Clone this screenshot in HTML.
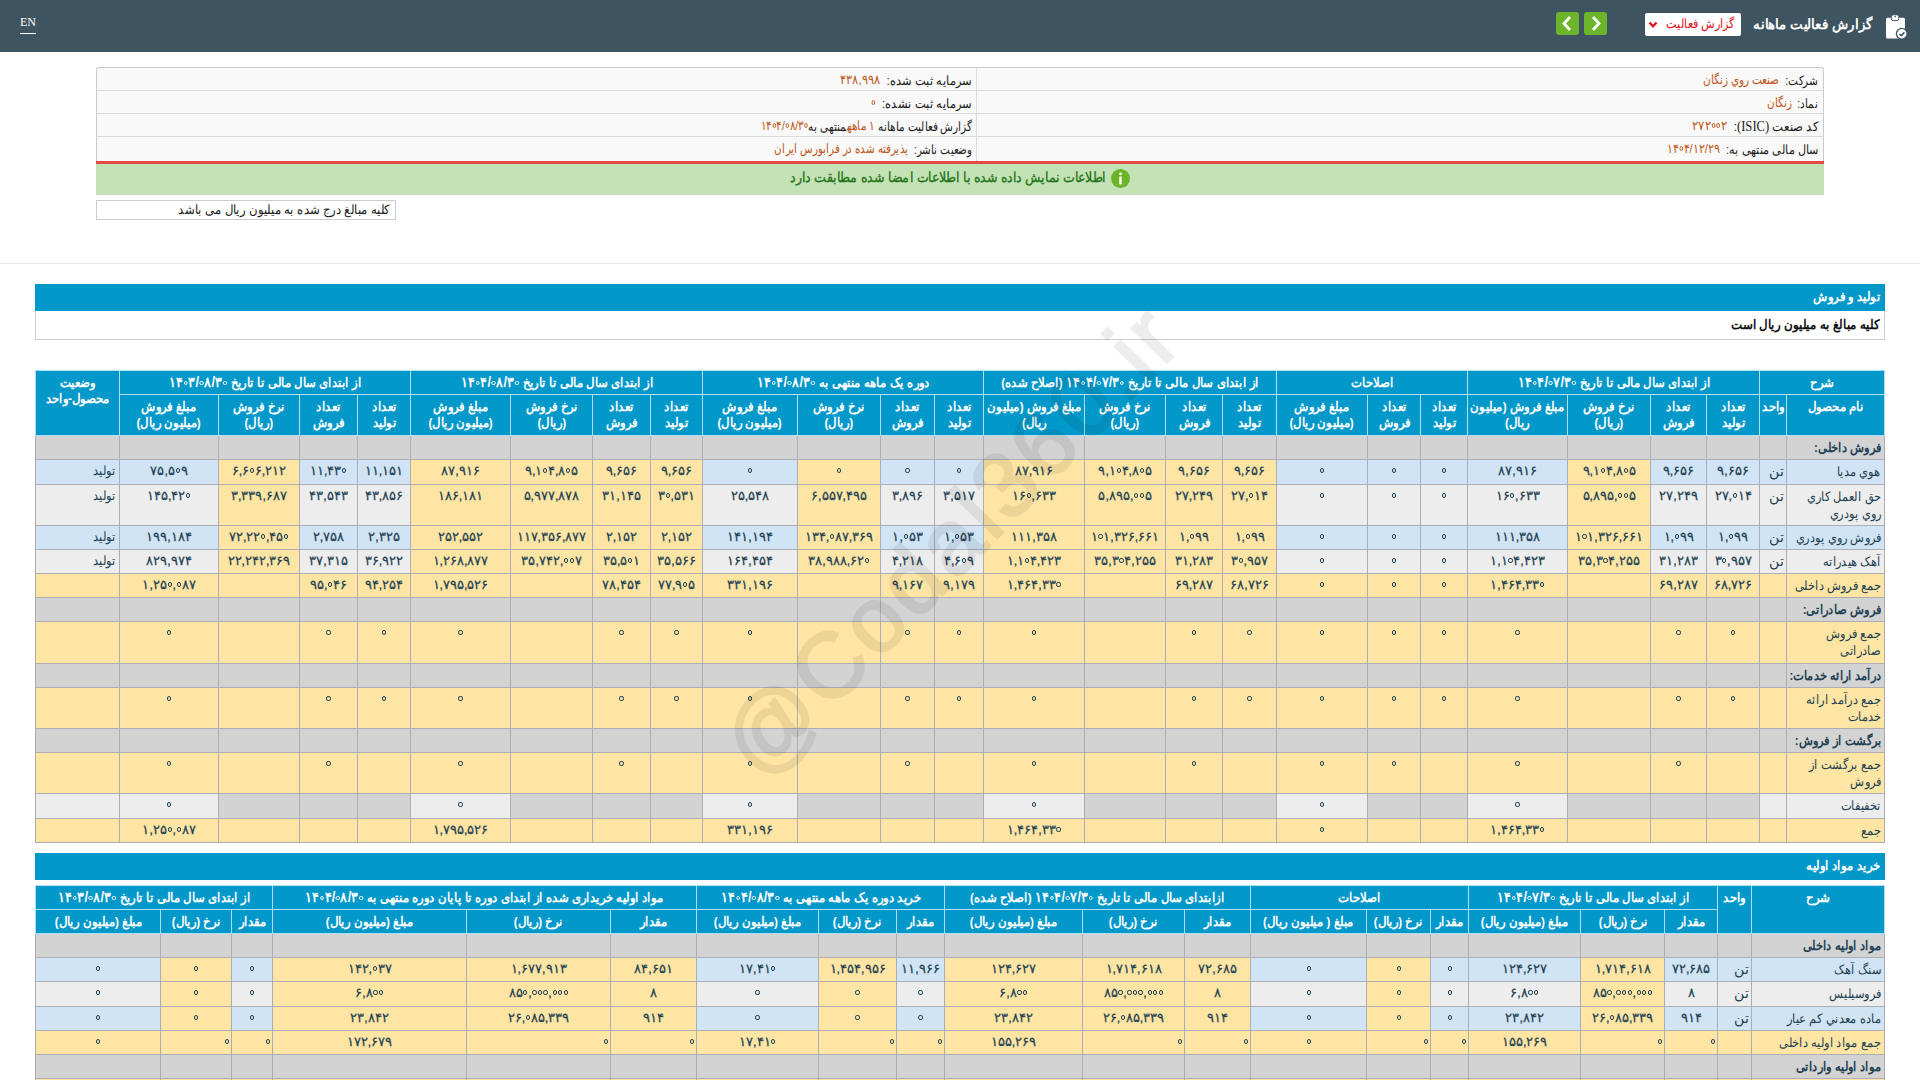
<!DOCTYPE html>
<html lang="fa" dir="rtl"><head><meta charset="utf-8"><title>Codal</title>
<style>
html,body{margin:0;padding:0;}
body{width:1920px;height:1080px;overflow:hidden;position:relative;background:#fff;font-family:"Liberation Sans",sans-serif;font-size:13px;color:#222;direction:rtl;}
.abs{position:absolute;}
.topbar{position:absolute;left:0;top:0;width:1920px;height:52px;background:#3f5461;}
.en{position:absolute;left:20px;top:16px;font-family:"Liberation Serif",serif;font-size:12px;color:#fff;direction:ltr;}
.en span{display:block;border-bottom:1px solid #fff;padding-bottom:5px;line-height:12px;}
.title{position:absolute;right:47px;top:14px;transform:scaleX(.95);transform-origin:100% 50%;color:#fff;font-weight:bold;font-size:14px;line-height:20px;white-space:nowrap;}
.dd{position:absolute;left:1645px;top:13px;width:96px;height:23px;background:#fff;border-radius:2px;}
.dd .tx{position:absolute;right:6px;top:2px;color:#e0141e;font-size:13px;transform:scaleX(.86);transform-origin:100% 50%;line-height:18px;white-space:nowrap;}
.gb{position:absolute;top:12px;width:23px;height:23px;background:#6cb52a;border-radius:3px;}
.info{position:absolute;left:96px;top:67px;width:1726px;height:94px;border:1px solid #cacaca;border-bottom:none;border-radius:3px 3px 0 0;background:#f9f9f9;}
.irow{position:absolute;left:0;width:1726px;height:23px;border-top:1px solid #dcdcdc;}
.ivl{position:absolute;left:879px;top:0;width:1px;height:94px;background:#dcdcdc;}
.it{position:absolute;white-space:nowrap;transform-origin:100% 50%;font-size:13px;line-height:18px;color:#222;}
.it b{font-weight:normal;color:#c0561a;position:relative;top:-1px;}
.red{position:absolute;left:96px;top:161px;width:1728px;height:3px;background:#e14a45;}
.green{position:absolute;left:96px;top:164px;width:1728px;height:31px;background:#c3e2b5;}
.gtext{position:absolute;right:814px;top:167px;transform:scaleX(.9);transform-origin:100% 50%;color:#1f741a;-webkit-text-stroke:0.3px #1f741a;font-size:14px;line-height:20px;white-space:nowrap;}
.icon-i{position:absolute;left:1111px;top:169px;width:19px;height:19px;border-radius:50%;background:#6cb52a;}
.note{position:absolute;left:96px;top:200px;width:298px;height:18px;border:1px solid #ccc;}
.note span{display:inline-block;position:absolute;right:5px;top:0px;font-size:13px;line-height:17px;white-space:nowrap;color:#222;}
.sep{position:absolute;left:0;top:263px;width:1920px;height:1px;background:#e8e8e8;}
.sh{position:absolute;left:35px;width:1850px;height:27px;background:#0398ca;color:#fff;font-weight:bold;font-size:13px;}
.sh span{position:absolute;right:5px;top:4px;line-height:18px;transform:scaleX(.9);transform-origin:100% 50%;}
.sbox{position:absolute;left:35px;top:311px;width:1848px;height:28px;border:1px solid #ccc;border-top:none;}
.sbox span{position:absolute;right:5px;top:5px;transform:scaleX(.91);transform-origin:100% 50%;font-weight:bold;font-size:13px;line-height:18px;color:#111;}
table.t{position:absolute;border-collapse:collapse;table-layout:fixed;font-size:12px;}
table.t th{background:#0398ca;color:#fff;font-weight:bold;border:1px solid #ade0f4;padding:0 2px;line-height:16px;text-align:center;vertical-align:middle;overflow:hidden;white-space:nowrap;}
table.t th.vt{vertical-align:top;padding-top:4px;}
table.t td{border:1px solid #adadb6;padding:0 3px;line-height:16px;vertical-align:top;text-align:center;color:#1f4254;overflow:hidden;white-space:nowrap;}
table.t td.n{padding-top:3px;direction:ltr;font-size:12.5px;-webkit-text-stroke:0.25px #1f4254;}
i.z{display:inline-block;width:2.2px;height:2.2px;border:1.15px solid currentColor;border-radius:50%;vertical-align:2.5px;margin:0 0.7px;}
.sx{display:inline-block;transform:scaleX(.88);transform-origin:100% 50%;}
table.t td.r{text-align:right;padding-right:1px;}
table.t td.lbl{text-align:right;padding-top:3px;white-space:nowrap;line-height:17px;color:#1f4254;font-size:13px;}
table.t td.u{padding-top:3px;font-size:14px;text-align:right;padding-right:2px;}
table.t td.st{text-align:right;padding-top:3px;font-size:13px;}
table.t tr.cat td{background:#d3d3d3;}
table.t tr.cat td.lbl{font-weight:bold;white-space:nowrap;}
.wm{position:absolute;left:601px;top:490px;width:700px;height:100px;line-height:100px;text-align:center;font-size:92px;letter-spacing:4px;font-weight:normal;-webkit-text-stroke:2.5px #000;color:#000;opacity:0.068;transform:rotate(-46deg);white-space:nowrap;direction:ltr;pointer-events:none;z-index:5;}

.d{display:inline-block;direction:ltr;}
.it b.d{color:#c0561a;}
table.t th i.z{vertical-align:1.5px;width:2.4px;height:2.4px;border-width:1.3px;}
.hx{display:inline-block;transform:scaleX(.9);margin:0 -30px;font-size:13px;}
table.t th .d{font-size:1.1em;line-height:14px;}

</style></head><body>
<div class="topbar"></div>
<div class="en"><span>EN</span></div>
<div class="title">گزارش فعالیت ماهانه</div>
<div class="dd"><div class="tx">گزارش فعالیت</div>
<svg class="abs" style="left:3px;top:7px" width="10" height="9" viewBox="0 0 10 9"><path d="M1.5 2.5 L5 6.2 L8.5 2.5" stroke="#e0141e" stroke-width="2.4" fill="none"/></svg></div>
<div class="gb" style="left:1584px"><svg width="23" height="23" viewBox="0 0 23 23"><path d="M9 5 L15 11.5 L9 18" stroke="#fff" stroke-width="2.8" fill="none"/></svg></div>
<div class="gb" style="left:1556px"><svg width="23" height="23" viewBox="0 0 23 23"><path d="M14 5 L8 11.5 L14 18" stroke="#fff" stroke-width="2.8" fill="none"/></svg></div>
<svg class="abs" style="left:1884px;top:13px" width="26" height="28" viewBox="0 0 26 28">
<rect x="2" y="4.7" width="19" height="20.8" rx="1.5" fill="#fff"/>
<rect x="7.3" y="1.8" width="7.6" height="5.8" rx="2" fill="#fff" stroke="#3f5461" stroke-width="1"/>
<circle cx="11.1" cy="3.6" r="0.8" fill="#3f5461"/>
<circle cx="17.8" cy="20.8" r="5.4" fill="#fff" stroke="#3f5461" stroke-width="1.4"/>
<path d="M15.4 21 L17.2 22.6 L20.4 19.4" stroke="#3f5461" stroke-width="1.5" fill="none"/>
</svg>
<div class="info">
<div class="irow" style="top:22px"></div>
<div class="irow" style="top:45px"></div>
<div class="irow" style="top:68px"></div>
<div class="ivl"></div>
<div class="it" style="right:5px;top:4px;transform:scaleX(.81)">شرکت:&nbsp; <b>صنعت روي زنگان</b></div>
<div class="it" style="right:5px;top:27px;transform:scaleX(.8)">نماد:&nbsp; <b>زنگان</b></div>
<div class="it" style="right:5px;top:50px;transform:scaleX(.9)">کد صنعت <span style="font-family:'Liberation Serif',serif;font-size:14px">(ISIC)</span>:&nbsp; <b class="d">۲۷۲<i class="z"></i><i class="z"></i>۲</b></div>
<div class="it" style="right:5px;top:73px;transform:scaleX(.86)">سال مالی منتهی به:&nbsp; <b class="d">۱۴<i class="z"></i>۴/۱۲/۲۹</b></div>
<div class="it" style="right:851px;top:4px;transform:scaleX(.88)">سرمایه ثبت شده:&nbsp; <b class="d">۴۳۸,۹۹۸</b></div>
<div class="it" style="right:851px;top:27px;transform:scaleX(.88)">سرمایه ثبت نشده:&nbsp; <b class="d"><i class="z"></i></b></div>
<div class="it" style="right:851px;top:50px;transform:scaleX(.81)">گزارش فعالیت ماهانه <b>۱ ماهه</b>منتهی به<b class="d">۱۴<i class="z"></i>۴/<i class="z"></i>۸/۳<i class="z"></i></b></div>
<div class="it" style="right:851px;top:73px;transform:scaleX(.79)">وضعیت ناشر:&nbsp; <b>پذیرفته شده در فرابورس ایران</b></div>
</div>
<div class="red"></div>
<div class="green"></div>
<div class="icon-i"><svg width="19" height="19" viewBox="0 0 19 19"><rect x="8.3" y="7.5" width="2.4" height="8" fill="#fff"/><circle cx="9.5" cy="4.8" r="1.4" fill="#fff"/></svg></div>
<div class="gtext">اطلاعات نمایش داده شده با اطلاعات امضا شده مطابقت دارد</div>
<div class="note"><span style="transform:scaleX(.9);transform-origin:100% 50%">کلیه مبالغ درج شده به میلیون ریال می باشد</span></div>
<div class="sep"></div>
<div class="sh" style="top:284px"><span>تولید و فروش</span></div>
<div class="sbox"><span>کلیه مبالغ به میلیون ریال است</span></div>
<div class="sh" style="top:853px"><span>خرید مواد اولیه</span></div>

<table class="t" id="t1" style="top:370px;left:35px;width:1850px">
<colgroup><col style="width:98px"><col style="width:27px"><col style="width:53px"><col style="width:56px"><col style="width:83px"><col style="width:100px"><col style="width:47px"><col style="width:53px"><col style="width:91px"><col style="width:54px"><col style="width:57px"><col style="width:81px"><col style="width:101px"><col style="width:49px"><col style="width:54px"><col style="width:83px"><col style="width:95px"><col style="width:52px"><col style="width:58px"><col style="width:82px"><col style="width:100px"><col style="width:53px"><col style="width:58px"><col style="width:81px"><col style="width:99px"><col style="width:84px"></colgroup>
<tr class="h1" style="height:24px"><th colspan="2"><span class="hx">شرح</span></th><th colspan="4"><span class="hx">از ابتدای سال مالی تا تاریخ <span class="d">۱۴<i class="z"></i>۴/<i class="z"></i>۷/۳<i class="z"></i></span></span></th><th colspan="3"><span class="hx">اصلاحات</span></th><th colspan="4"><span class="hx">از ابتدای سال مالی تا تاریخ <span class="d">۱۴<i class="z"></i>۴/<i class="z"></i>۷/۳<i class="z"></i></span> (اصلاح شده)</span></th><th colspan="4"><span class="hx">دوره یک ماهه منتهی به <span class="d">۱۴<i class="z"></i>۴/<i class="z"></i>۸/۳<i class="z"></i></span></span></th><th colspan="4"><span class="hx">از ابتدای سال مالی تا تاریخ <span class="d">۱۴<i class="z"></i>۴/<i class="z"></i>۸/۳<i class="z"></i></span></span></th><th colspan="4"><span class="hx">از ابتدای سال مالی تا تاریخ <span class="d">۱۴<i class="z"></i>۳/<i class="z"></i>۸/۳<i class="z"></i></span></span></th><th rowspan="2" class="vt"><span class="hx">وضعیت<br>محصول-واحد</span></th></tr>
<tr class="h2" style="height:41px"><th class="vt"><span class="hx">نام محصول</span></th><th class="vt"><span class="hx">واحد</span></th><th><span class="hx">تعداد<br>تولید</span></th><th><span class="hx">تعداد<br>فروش</span></th><th><span class="hx">نرخ فروش<br>(ریال)</span></th><th><span class="hx">مبلغ فروش (میلیون<br>ریال)</span></th><th><span class="hx">تعداد<br>تولید</span></th><th><span class="hx">تعداد<br>فروش</span></th><th><span class="hx">مبلغ فروش<br>(میلیون ریال)</span></th><th><span class="hx">تعداد<br>تولید</span></th><th><span class="hx">تعداد<br>فروش</span></th><th><span class="hx">نرخ فروش<br>(ریال)</span></th><th><span class="hx">مبلغ فروش (میلیون<br>ریال)</span></th><th><span class="hx">تعداد<br>تولید</span></th><th><span class="hx">تعداد<br>فروش</span></th><th><span class="hx">نرخ فروش<br>(ریال)</span></th><th><span class="hx">مبلغ فروش<br>(میلیون ریال)</span></th><th><span class="hx">تعداد<br>تولید</span></th><th><span class="hx">تعداد<br>فروش</span></th><th><span class="hx">نرخ فروش<br>(ریال)</span></th><th><span class="hx">مبلغ فروش<br>(میلیون ریال)</span></th><th><span class="hx">تعداد<br>تولید</span></th><th><span class="hx">تعداد<br>فروش</span></th><th><span class="hx">نرخ فروش<br>(ریال)</span></th><th><span class="hx">مبلغ فروش<br>(میلیون ریال)</span></th></tr>
<tr style="height:24px" class="cat"><td class="lbl"><span class="sx">فروش داخلی:</span></td><td></td><td></td><td></td><td></td><td></td><td></td><td></td><td></td><td></td><td></td><td></td><td></td><td></td><td></td><td></td><td></td><td></td><td></td><td></td><td></td><td></td><td></td><td></td><td></td><td></td></tr>
<tr style="height:25px"><td class="lbl" style="background:#d1e4f6"><span class="sx">هوي مديا</span></td><td class="u" style="background:#d1e4f6">تن</td><td class="n" style="background:#d1e4f6">۹,۶۵۶</td><td class="n" style="background:#d1e4f6">۹,۶۵۶</td><td class="n" style="background:#fee5a3">۹,۱<i class="z"></i>۴,۸<i class="z"></i>۵</td><td class="n" style="background:#d1e4f6">۸۷,۹۱۶</td><td class="n" style="background:#d1e4f6"><i class="z"></i></td><td class="n" style="background:#d1e4f6"><i class="z"></i></td><td class="n" style="background:#d1e4f6"><i class="z"></i></td><td class="n" style="background:#fee5a3">۹,۶۵۶</td><td class="n" style="background:#fee5a3">۹,۶۵۶</td><td class="n" style="background:#fee5a3">۹,۱<i class="z"></i>۴,۸<i class="z"></i>۵</td><td class="n" style="background:#fee5a3">۸۷,۹۱۶</td><td class="n" style="background:#d1e4f6"><i class="z"></i></td><td class="n" style="background:#d1e4f6"><i class="z"></i></td><td class="n" style="background:#fee5a3"><i class="z"></i></td><td class="n" style="background:#d1e4f6"><i class="z"></i></td><td class="n" style="background:#fee5a3">۹,۶۵۶</td><td class="n" style="background:#fee5a3">۹,۶۵۶</td><td class="n" style="background:#fee5a3">۹,۱<i class="z"></i>۴,۸<i class="z"></i>۵</td><td class="n" style="background:#fee5a3">۸۷,۹۱۶</td><td class="n" style="background:#d1e4f6">۱۱,۱۵۱</td><td class="n" style="background:#d1e4f6">۱۱,۴۳<i class="z"></i></td><td class="n" style="background:#fee5a3">۶,۶<i class="z"></i>۶,۲۱۲</td><td class="n" style="background:#d1e4f6">۷۵,۵<i class="z"></i>۹</td><td class="st" style="background:#d1e4f6"><span class="sx">تولید</span></td></tr>
<tr style="height:41px"><td class="lbl" style="background:#ededed"><span class="sx">حق العمل كاري<br>روي پودري</span></td><td class="u" style="background:#ededed">تن</td><td class="n" style="background:#ededed">۲۷,<i class="z"></i>۱۴</td><td class="n" style="background:#ededed">۲۷,۲۴۹</td><td class="n" style="background:#fee5a3">۵,۸۹۵,<i class="z"></i><i class="z"></i>۵</td><td class="n" style="background:#ededed">۱۶<i class="z"></i>,۶۳۳</td><td class="n" style="background:#ededed"><i class="z"></i></td><td class="n" style="background:#ededed"><i class="z"></i></td><td class="n" style="background:#ededed"><i class="z"></i></td><td class="n" style="background:#fee5a3">۲۷,<i class="z"></i>۱۴</td><td class="n" style="background:#fee5a3">۲۷,۲۴۹</td><td class="n" style="background:#fee5a3">۵,۸۹۵,<i class="z"></i><i class="z"></i>۵</td><td class="n" style="background:#fee5a3">۱۶<i class="z"></i>,۶۳۳</td><td class="n" style="background:#ededed">۳,۵۱۷</td><td class="n" style="background:#ededed">۳,۸۹۶</td><td class="n" style="background:#fee5a3">۶,۵۵۷,۴۹۵</td><td class="n" style="background:#ededed">۲۵,۵۴۸</td><td class="n" style="background:#fee5a3">۳<i class="z"></i>,۵۳۱</td><td class="n" style="background:#fee5a3">۳۱,۱۴۵</td><td class="n" style="background:#fee5a3">۵,۹۷۷,۸۷۸</td><td class="n" style="background:#fee5a3">۱۸۶,۱۸۱</td><td class="n" style="background:#ededed">۴۳,۸۵۶</td><td class="n" style="background:#ededed">۴۳,۵۴۳</td><td class="n" style="background:#fee5a3">۳,۳۳۹,۶۸۷</td><td class="n" style="background:#ededed">۱۴۵,۴۲<i class="z"></i></td><td class="st" style="background:#ededed"><span class="sx">تولید</span></td></tr>
<tr style="height:24px"><td class="lbl" style="background:#d1e4f6"><span class="sx">فروش روي پودري</span></td><td class="u" style="background:#d1e4f6">تن</td><td class="n" style="background:#d1e4f6">۱,<i class="z"></i>۹۹</td><td class="n" style="background:#d1e4f6">۱,<i class="z"></i>۹۹</td><td class="n" style="background:#fee5a3">۱<i class="z"></i>۱,۳۲۶,۶۶۱</td><td class="n" style="background:#d1e4f6">۱۱۱,۳۵۸</td><td class="n" style="background:#d1e4f6"><i class="z"></i></td><td class="n" style="background:#d1e4f6"><i class="z"></i></td><td class="n" style="background:#d1e4f6"><i class="z"></i></td><td class="n" style="background:#fee5a3">۱,<i class="z"></i>۹۹</td><td class="n" style="background:#fee5a3">۱,<i class="z"></i>۹۹</td><td class="n" style="background:#fee5a3">۱<i class="z"></i>۱,۳۲۶,۶۶۱</td><td class="n" style="background:#fee5a3">۱۱۱,۳۵۸</td><td class="n" style="background:#d1e4f6">۱,<i class="z"></i>۵۳</td><td class="n" style="background:#d1e4f6">۱,<i class="z"></i>۵۳</td><td class="n" style="background:#fee5a3">۱۳۴,<i class="z"></i>۸۷,۳۶۹</td><td class="n" style="background:#d1e4f6">۱۴۱,۱۹۴</td><td class="n" style="background:#fee5a3">۲,۱۵۲</td><td class="n" style="background:#fee5a3">۲,۱۵۲</td><td class="n" style="background:#fee5a3">۱۱۷,۳۵۶,۸۷۷</td><td class="n" style="background:#fee5a3">۲۵۲,۵۵۲</td><td class="n" style="background:#d1e4f6">۲,۳۲۵</td><td class="n" style="background:#d1e4f6">۲,۷۵۸</td><td class="n" style="background:#fee5a3">۷۲,۲۲<i class="z"></i>,۴۵<i class="z"></i></td><td class="n" style="background:#d1e4f6">۱۹۹,۱۸۴</td><td class="st" style="background:#d1e4f6"><span class="sx">تولید</span></td></tr>
<tr style="height:24px"><td class="lbl" style="background:#ededed"><span class="sx">آهک هیدراته</span></td><td class="u" style="background:#ededed">تن</td><td class="n" style="background:#ededed">۳<i class="z"></i>,۹۵۷</td><td class="n" style="background:#ededed">۳۱,۲۸۳</td><td class="n" style="background:#fee5a3">۳۵,۳<i class="z"></i>۴,۲۵۵</td><td class="n" style="background:#ededed">۱,۱<i class="z"></i>۴,۴۲۳</td><td class="n" style="background:#ededed"><i class="z"></i></td><td class="n" style="background:#ededed"><i class="z"></i></td><td class="n" style="background:#ededed"><i class="z"></i></td><td class="n" style="background:#fee5a3">۳<i class="z"></i>,۹۵۷</td><td class="n" style="background:#fee5a3">۳۱,۲۸۳</td><td class="n" style="background:#fee5a3">۳۵,۳<i class="z"></i>۴,۲۵۵</td><td class="n" style="background:#fee5a3">۱,۱<i class="z"></i>۴,۴۲۳</td><td class="n" style="background:#ededed">۴,۶<i class="z"></i>۹</td><td class="n" style="background:#ededed">۴,۲۱۸</td><td class="n" style="background:#fee5a3">۳۸,۹۸۸,۶۲<i class="z"></i></td><td class="n" style="background:#ededed">۱۶۴,۴۵۴</td><td class="n" style="background:#fee5a3">۳۵,۵۶۶</td><td class="n" style="background:#fee5a3">۳۵,۵<i class="z"></i>۱</td><td class="n" style="background:#fee5a3">۳۵,۷۴۲,<i class="z"></i><i class="z"></i>۷</td><td class="n" style="background:#fee5a3">۱,۲۶۸,۸۷۷</td><td class="n" style="background:#ededed">۳۶,۹۲۲</td><td class="n" style="background:#ededed">۳۷,۳۱۵</td><td class="n" style="background:#fee5a3">۲۲,۲۴۲,۳۶۹</td><td class="n" style="background:#ededed">۸۲۹,۹۷۴</td><td class="st" style="background:#ededed"><span class="sx">تولید</span></td></tr>
<tr style="height:24px"><td class="lbl" style="background:#fee5a3"><span class="sx">جمع فروش داخلی</span></td><td class="u" style="background:#fee5a3"></td><td class="n" style="background:#fee5a3">۶۸,۷۲۶</td><td class="n" style="background:#fee5a3">۶۹,۲۸۷</td><td class="n" style="background:#fee5a3"></td><td class="n" style="background:#fee5a3">۱,۴۶۴,۳۳<i class="z"></i></td><td class="n" style="background:#fee5a3"><i class="z"></i></td><td class="n" style="background:#fee5a3"><i class="z"></i></td><td class="n" style="background:#fee5a3"><i class="z"></i></td><td class="n" style="background:#fee5a3">۶۸,۷۲۶</td><td class="n" style="background:#fee5a3">۶۹,۲۸۷</td><td class="n" style="background:#fee5a3"></td><td class="n" style="background:#fee5a3">۱,۴۶۴,۳۳<i class="z"></i></td><td class="n" style="background:#fee5a3">۹,۱۷۹</td><td class="n" style="background:#fee5a3">۹,۱۶۷</td><td class="n" style="background:#fee5a3"></td><td class="n" style="background:#fee5a3">۳۳۱,۱۹۶</td><td class="n" style="background:#fee5a3">۷۷,۹<i class="z"></i>۵</td><td class="n" style="background:#fee5a3">۷۸,۴۵۴</td><td class="n" style="background:#fee5a3"></td><td class="n" style="background:#fee5a3">۱,۷۹۵,۵۲۶</td><td class="n" style="background:#fee5a3">۹۴,۲۵۴</td><td class="n" style="background:#fee5a3">۹۵,<i class="z"></i>۴۶</td><td class="n" style="background:#fee5a3"></td><td class="n" style="background:#fee5a3">۱,۲۵<i class="z"></i>,<i class="z"></i>۸۷</td><td class="st" style="background:#fee5a3"></td></tr>
<tr style="height:24px" class="cat"><td class="lbl"><span class="sx">فروش صادراتی:</span></td><td></td><td></td><td></td><td></td><td></td><td></td><td></td><td></td><td></td><td></td><td></td><td></td><td></td><td></td><td></td><td></td><td></td><td></td><td></td><td></td><td></td><td></td><td></td><td></td><td></td></tr>
<tr style="height:42px"><td class="lbl" style="background:#fee5a3"><span class="sx">جمع فروش<br>صادراتی</span></td><td class="u" style="background:#fee5a3"></td><td class="n" style="background:#fee5a3"><i class="z"></i></td><td class="n" style="background:#fee5a3"><i class="z"></i></td><td class="n" style="background:#fee5a3"></td><td class="n" style="background:#fee5a3"><i class="z"></i></td><td class="n" style="background:#fee5a3"><i class="z"></i></td><td class="n" style="background:#fee5a3"><i class="z"></i></td><td class="n" style="background:#fee5a3"><i class="z"></i></td><td class="n" style="background:#fee5a3"><i class="z"></i></td><td class="n" style="background:#fee5a3"><i class="z"></i></td><td class="n" style="background:#fee5a3"></td><td class="n" style="background:#fee5a3"><i class="z"></i></td><td class="n" style="background:#fee5a3"><i class="z"></i></td><td class="n" style="background:#fee5a3"><i class="z"></i></td><td class="n" style="background:#fee5a3"></td><td class="n" style="background:#fee5a3"><i class="z"></i></td><td class="n" style="background:#fee5a3"><i class="z"></i></td><td class="n" style="background:#fee5a3"><i class="z"></i></td><td class="n" style="background:#fee5a3"></td><td class="n" style="background:#fee5a3"><i class="z"></i></td><td class="n" style="background:#fee5a3"><i class="z"></i></td><td class="n" style="background:#fee5a3"><i class="z"></i></td><td class="n" style="background:#fee5a3"></td><td class="n" style="background:#fee5a3"><i class="z"></i></td><td class="st" style="background:#fee5a3"></td></tr>
<tr style="height:24px" class="cat"><td class="lbl"><span class="sx">درآمد ارائه خدمات:</span></td><td></td><td></td><td></td><td></td><td></td><td></td><td></td><td></td><td></td><td></td><td></td><td></td><td></td><td></td><td></td><td></td><td></td><td></td><td></td><td></td><td></td><td></td><td></td><td></td><td></td></tr>
<tr style="height:41px"><td class="lbl" style="background:#fee5a3"><span class="sx">جمع درآمد ارائه<br>خدمات</span></td><td class="u" style="background:#fee5a3"></td><td class="n" style="background:#fee5a3"><i class="z"></i></td><td class="n" style="background:#fee5a3"><i class="z"></i></td><td class="n" style="background:#fee5a3"></td><td class="n" style="background:#fee5a3"><i class="z"></i></td><td class="n" style="background:#fee5a3"><i class="z"></i></td><td class="n" style="background:#fee5a3"><i class="z"></i></td><td class="n" style="background:#fee5a3"><i class="z"></i></td><td class="n" style="background:#fee5a3"><i class="z"></i></td><td class="n" style="background:#fee5a3"><i class="z"></i></td><td class="n" style="background:#fee5a3"></td><td class="n" style="background:#fee5a3"><i class="z"></i></td><td class="n" style="background:#fee5a3"><i class="z"></i></td><td class="n" style="background:#fee5a3"><i class="z"></i></td><td class="n" style="background:#fee5a3"></td><td class="n" style="background:#fee5a3"><i class="z"></i></td><td class="n" style="background:#fee5a3"><i class="z"></i></td><td class="n" style="background:#fee5a3"><i class="z"></i></td><td class="n" style="background:#fee5a3"></td><td class="n" style="background:#fee5a3"><i class="z"></i></td><td class="n" style="background:#fee5a3"><i class="z"></i></td><td class="n" style="background:#fee5a3"><i class="z"></i></td><td class="n" style="background:#fee5a3"></td><td class="n" style="background:#fee5a3"><i class="z"></i></td><td class="st" style="background:#fee5a3"></td></tr>
<tr style="height:24px" class="cat"><td class="lbl"><span class="sx">برگشت از فروش:</span></td><td></td><td></td><td></td><td></td><td></td><td></td><td></td><td></td><td></td><td></td><td></td><td></td><td></td><td></td><td></td><td></td><td></td><td></td><td></td><td></td><td></td><td></td><td></td><td></td><td></td></tr>
<tr style="height:41px"><td class="lbl" style="background:#fee5a3"><span class="sx">جمع برگشت از<br>فروش</span></td><td class="u" style="background:#fee5a3"></td><td class="n" style="background:#fee5a3"></td><td class="n" style="background:#fee5a3"><i class="z"></i></td><td class="n" style="background:#fee5a3"></td><td class="n" style="background:#fee5a3"><i class="z"></i></td><td class="n" style="background:#fee5a3"></td><td class="n" style="background:#fee5a3"><i class="z"></i></td><td class="n" style="background:#fee5a3"><i class="z"></i></td><td class="n" style="background:#fee5a3"></td><td class="n" style="background:#fee5a3"><i class="z"></i></td><td class="n" style="background:#fee5a3"></td><td class="n" style="background:#fee5a3"><i class="z"></i></td><td class="n" style="background:#fee5a3"></td><td class="n" style="background:#fee5a3"><i class="z"></i></td><td class="n" style="background:#fee5a3"></td><td class="n" style="background:#fee5a3"><i class="z"></i></td><td class="n" style="background:#fee5a3"></td><td class="n" style="background:#fee5a3"><i class="z"></i></td><td class="n" style="background:#fee5a3"></td><td class="n" style="background:#fee5a3"><i class="z"></i></td><td class="n" style="background:#fee5a3"></td><td class="n" style="background:#fee5a3"><i class="z"></i></td><td class="n" style="background:#fee5a3"></td><td class="n" style="background:#fee5a3"><i class="z"></i></td><td class="st" style="background:#fee5a3"></td></tr>
<tr style="height:25px"><td class="lbl" style="background:#ededed"><span class="sx">تخفیفات</span></td><td class="u" style="background:#ededed"></td><td class="n" style="background:#d3d3d3"></td><td class="n" style="background:#d3d3d3"></td><td class="n" style="background:#d3d3d3"></td><td class="n" style="background:#ededed"><i class="z"></i></td><td class="n" style="background:#d3d3d3"></td><td class="n" style="background:#d3d3d3"></td><td class="n" style="background:#ededed"><i class="z"></i></td><td class="n" style="background:#d3d3d3"></td><td class="n" style="background:#d3d3d3"></td><td class="n" style="background:#d3d3d3"></td><td class="n" style="background:#ededed"><i class="z"></i></td><td class="n" style="background:#d3d3d3"></td><td class="n" style="background:#d3d3d3"></td><td class="n" style="background:#d3d3d3"></td><td class="n" style="background:#ededed"><i class="z"></i></td><td class="n" style="background:#d3d3d3"></td><td class="n" style="background:#d3d3d3"></td><td class="n" style="background:#d3d3d3"></td><td class="n" style="background:#ededed"><i class="z"></i></td><td class="n" style="background:#d3d3d3"></td><td class="n" style="background:#d3d3d3"></td><td class="n" style="background:#d3d3d3"></td><td class="n" style="background:#ededed"><i class="z"></i></td><td class="st" style="background:#ededed"></td></tr>
<tr style="height:24px"><td class="lbl" style="background:#fee5a3"><span class="sx">جمع</span></td><td class="u" style="background:#fee5a3"></td><td class="n" style="background:#fee5a3"></td><td class="n" style="background:#fee5a3"></td><td class="n" style="background:#fee5a3"></td><td class="n" style="background:#fee5a3">۱,۴۶۴,۳۳<i class="z"></i></td><td class="n" style="background:#fee5a3"></td><td class="n" style="background:#fee5a3"></td><td class="n" style="background:#fee5a3"><i class="z"></i></td><td class="n" style="background:#fee5a3"></td><td class="n" style="background:#fee5a3"></td><td class="n" style="background:#fee5a3"></td><td class="n" style="background:#fee5a3">۱,۴۶۴,۳۳<i class="z"></i></td><td class="n" style="background:#fee5a3"></td><td class="n" style="background:#fee5a3"></td><td class="n" style="background:#fee5a3"></td><td class="n" style="background:#fee5a3">۳۳۱,۱۹۶</td><td class="n" style="background:#fee5a3"></td><td class="n" style="background:#fee5a3"></td><td class="n" style="background:#fee5a3"></td><td class="n" style="background:#fee5a3">۱,۷۹۵,۵۲۶</td><td class="n" style="background:#fee5a3"></td><td class="n" style="background:#fee5a3"></td><td class="n" style="background:#fee5a3"></td><td class="n" style="background:#fee5a3">۱,۲۵<i class="z"></i>,<i class="z"></i>۸۷</td><td class="st" style="background:#fee5a3"></td></tr>
</table>
<table class="t" id="t2" style="top:885px;left:35px;width:1850px">
<colgroup><col style="width:133px"><col style="width:34px"><col style="width:53px"><col style="width:84px"><col style="width:112px"><col style="width:38px"><col style="width:64px"><col style="width:116px"><col style="width:66px"><col style="width:102px"><col style="width:138px"><col style="width:48px"><col style="width:78px"><col style="width:122px"><col style="width:86px"><col style="width:144px"><col style="width:194px"><col style="width:41px"><col style="width:71px"><col style="width:125px"></colgroup>
<tr class="h1" style="height:24px"><th rowspan="2" class="vt"><span class="hx">شرح</span></th><th rowspan="2" class="vt"><span class="hx">واحد</span></th><th colspan="3"><span class="hx">از ابتدای سال مالی تا تاریخ <span class="d">۱۴<i class="z"></i>۴/<i class="z"></i>۷/۳<i class="z"></i></span></span></th><th colspan="3"><span class="hx">اصلاحات</span></th><th colspan="3"><span class="hx">ازابتدای سال مالی تا تاریخ <span class="d">۱۴<i class="z"></i>۴/<i class="z"></i>۷/۳<i class="z"></i></span> (اصلاح شده)</span></th><th colspan="3"><span class="hx">خرید دوره یک ماهه منتهی به <span class="d">۱۴<i class="z"></i>۴/<i class="z"></i>۸/۳<i class="z"></i></span></span></th><th colspan="3"><span class="hx">مواد اولیه خریداری شده از ابتدای دوره تا پایان دوره منتهی به <span class="d">۱۴<i class="z"></i>۴/<i class="z"></i>۸/۳<i class="z"></i></span></span></th><th colspan="3"><span class="hx">از ابتدای سال مالی تا تاریخ <span class="d">۱۴<i class="z"></i>۳/<i class="z"></i>۸/۳<i class="z"></i></span></span></th></tr>
<tr class="h2" style="height:24px"><th><span class="hx">مقدار</span></th><th><span class="hx">نرخ (ریال)</span></th><th><span class="hx">مبلغ (میلیون ریال)</span></th><th><span class="hx">مقدار</span></th><th><span class="hx">نرخ (ریال)</span></th><th><span class="hx">مبلغ ( میلیون ریال)</span></th><th><span class="hx">مقدار</span></th><th><span class="hx">نرخ (ریال)</span></th><th><span class="hx">مبلغ (میلیون ریال)</span></th><th><span class="hx">مقدار</span></th><th><span class="hx">نرخ (ریال)</span></th><th><span class="hx">مبلغ (میلیون ریال)</span></th><th><span class="hx">مقدار</span></th><th><span class="hx">نرخ (ریال)</span></th><th><span class="hx">مبلغ (میلیون ریال)</span></th><th><span class="hx">مقدار</span></th><th><span class="hx">نرخ (ریال)</span></th><th><span class="hx">مبلغ (میلیون ریال)</span></th></tr>
<tr style="height:24px" class="cat"><td class="lbl"><span class="sx">مواد اولیه داخلی</span></td><td></td><td></td><td></td><td></td><td></td><td></td><td></td><td></td><td></td><td></td><td></td><td></td><td></td><td></td><td></td><td></td><td></td><td></td><td></td></tr>
<tr style="height:24px"><td class="lbl" style="background:#d1e4f6"><span class="sx">سنگ آهک</span></td><td class="u" style="background:#d1e4f6">تن</td><td class="n" style="background:#d1e4f6">۷۲,۶۸۵</td><td class="n" style="background:#fee5a3">۱,۷۱۴,۶۱۸</td><td class="n" style="background:#d1e4f6">۱۲۴,۶۲۷</td><td class="n" style="background:#d1e4f6"><i class="z"></i></td><td class="n" style="background:#fee5a3"><i class="z"></i></td><td class="n" style="background:#d1e4f6"><i class="z"></i></td><td class="n" style="background:#fee5a3">۷۲,۶۸۵</td><td class="n" style="background:#fee5a3">۱,۷۱۴,۶۱۸</td><td class="n" style="background:#fee5a3">۱۲۴,۶۲۷</td><td class="n" style="background:#d1e4f6">۱۱,۹۶۶</td><td class="n" style="background:#fee5a3">۱,۴۵۴,۹۵۶</td><td class="n" style="background:#d1e4f6">۱۷,۴۱<i class="z"></i></td><td class="n" style="background:#fee5a3">۸۴,۶۵۱</td><td class="n" style="background:#fee5a3">۱,۶۷۷,۹۱۳</td><td class="n" style="background:#fee5a3">۱۴۲,<i class="z"></i>۳۷</td><td class="n" style="background:#d1e4f6"><i class="z"></i></td><td class="n" style="background:#fee5a3"><i class="z"></i></td><td class="n" style="background:#d1e4f6"><i class="z"></i></td></tr>
<tr style="height:25px"><td class="lbl" style="background:#ededed"><span class="sx">فروسیلیس</span></td><td class="u" style="background:#ededed">تن</td><td class="n" style="background:#ededed">۸</td><td class="n" style="background:#fee5a3">۸۵<i class="z"></i>,<i class="z"></i><i class="z"></i><i class="z"></i>,<i class="z"></i><i class="z"></i><i class="z"></i></td><td class="n" style="background:#ededed">۶,۸<i class="z"></i><i class="z"></i></td><td class="n" style="background:#ededed"><i class="z"></i></td><td class="n" style="background:#fee5a3"><i class="z"></i></td><td class="n" style="background:#ededed"><i class="z"></i></td><td class="n" style="background:#fee5a3">۸</td><td class="n" style="background:#fee5a3">۸۵<i class="z"></i>,<i class="z"></i><i class="z"></i><i class="z"></i>,<i class="z"></i><i class="z"></i><i class="z"></i></td><td class="n" style="background:#fee5a3">۶,۸<i class="z"></i><i class="z"></i></td><td class="n" style="background:#ededed"><i class="z"></i></td><td class="n" style="background:#fee5a3"><i class="z"></i></td><td class="n" style="background:#ededed"><i class="z"></i></td><td class="n" style="background:#fee5a3">۸</td><td class="n" style="background:#fee5a3">۸۵<i class="z"></i>,<i class="z"></i><i class="z"></i><i class="z"></i>,<i class="z"></i><i class="z"></i><i class="z"></i></td><td class="n" style="background:#fee5a3">۶,۸<i class="z"></i><i class="z"></i></td><td class="n" style="background:#ededed"><i class="z"></i></td><td class="n" style="background:#fee5a3"><i class="z"></i></td><td class="n" style="background:#ededed"><i class="z"></i></td></tr>
<tr style="height:24px"><td class="lbl" style="background:#d1e4f6"><span class="sx">ماده معدني كم عيار</span></td><td class="u" style="background:#d1e4f6">تن</td><td class="n" style="background:#d1e4f6">۹۱۴</td><td class="n" style="background:#fee5a3">۲۶,<i class="z"></i>۸۵,۳۳۹</td><td class="n" style="background:#d1e4f6">۲۳,۸۴۲</td><td class="n" style="background:#d1e4f6"><i class="z"></i></td><td class="n" style="background:#fee5a3"><i class="z"></i></td><td class="n" style="background:#d1e4f6"><i class="z"></i></td><td class="n" style="background:#fee5a3">۹۱۴</td><td class="n" style="background:#fee5a3">۲۶,<i class="z"></i>۸۵,۳۳۹</td><td class="n" style="background:#fee5a3">۲۳,۸۴۲</td><td class="n" style="background:#d1e4f6"><i class="z"></i></td><td class="n" style="background:#fee5a3"><i class="z"></i></td><td class="n" style="background:#d1e4f6"><i class="z"></i></td><td class="n" style="background:#fee5a3">۹۱۴</td><td class="n" style="background:#fee5a3">۲۶,<i class="z"></i>۸۵,۳۳۹</td><td class="n" style="background:#fee5a3">۲۳,۸۴۲</td><td class="n" style="background:#d1e4f6"><i class="z"></i></td><td class="n" style="background:#fee5a3"><i class="z"></i></td><td class="n" style="background:#d1e4f6"><i class="z"></i></td></tr>
<tr style="height:24px"><td class="lbl" style="background:#fee5a3"><span class="sx">جمع مواد اولیه داخلی</span></td><td class="u" style="background:#fee5a3"></td><td class="n r" style="background:#fee5a3"><i class="z"></i></td><td class="n r" style="background:#fee5a3"><i class="z"></i></td><td class="n" style="background:#fee5a3">۱۵۵,۲۶۹</td><td class="n r" style="background:#fee5a3"><i class="z"></i></td><td class="n r" style="background:#fee5a3"><i class="z"></i></td><td class="n" style="background:#fee5a3"><i class="z"></i></td><td class="n r" style="background:#fee5a3"><i class="z"></i></td><td class="n r" style="background:#fee5a3"><i class="z"></i></td><td class="n" style="background:#fee5a3">۱۵۵,۲۶۹</td><td class="n r" style="background:#fee5a3"><i class="z"></i></td><td class="n r" style="background:#fee5a3"><i class="z"></i></td><td class="n" style="background:#fee5a3">۱۷,۴۱<i class="z"></i></td><td class="n r" style="background:#fee5a3"><i class="z"></i></td><td class="n r" style="background:#fee5a3"><i class="z"></i></td><td class="n" style="background:#fee5a3">۱۷۲,۶۷۹</td><td class="n r" style="background:#fee5a3"><i class="z"></i></td><td class="n r" style="background:#fee5a3"><i class="z"></i></td><td class="n" style="background:#fee5a3"><i class="z"></i></td></tr>
<tr style="height:24px" class="cat"><td class="lbl"><span class="sx">مواد اولیه وارداتی</span></td><td></td><td></td><td></td><td></td><td></td><td></td><td></td><td></td><td></td><td></td><td></td><td></td><td></td><td></td><td></td><td></td><td></td><td></td><td></td></tr>
<tr style="height:24px"><td class="lbl" style="background:#fee5a3"><span class="sx"></span></td><td class="u" style="background:#fee5a3"></td><td class="n" style="background:#fee5a3"></td><td class="n" style="background:#fee5a3"></td><td class="n" style="background:#fee5a3"></td><td class="n" style="background:#fee5a3"></td><td class="n" style="background:#fee5a3"></td><td class="n" style="background:#fee5a3"></td><td class="n" style="background:#fee5a3"></td><td class="n" style="background:#fee5a3"></td><td class="n" style="background:#fee5a3"></td><td class="n" style="background:#fee5a3"></td><td class="n" style="background:#fee5a3"></td><td class="n" style="background:#fee5a3"></td><td class="n" style="background:#fee5a3"></td><td class="n" style="background:#fee5a3"></td><td class="n" style="background:#fee5a3"></td><td class="n" style="background:#fee5a3"></td><td class="n" style="background:#fee5a3"></td><td class="n" style="background:#fee5a3"></td></tr>
</table>
<div class="wm">@Codal360.ir</div>
</body></html>
